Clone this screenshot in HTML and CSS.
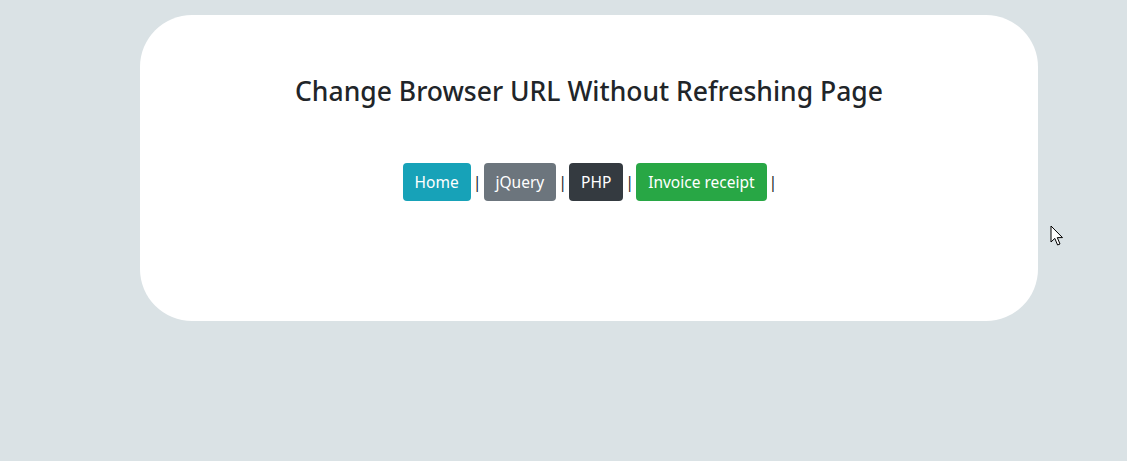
FILE: index.html
```html
<!DOCTYPE html>
<html lang="en">
<head>
<meta charset="utf-8">
<title>Change Browser URL Without Refreshing Page</title>
<link rel="stylesheet" href="styles.css">
</head>
<body>
<div class="card">
  <h3 class="title">Change Browser URL Without Refreshing Page</h3>
  <div class="nav">
    <a class="btn btn-info" href="#">Home</a><span class="sep">|</span><a class="btn btn-secondary" href="#">jQuery</a><span class="sep">|</span><a class="btn btn-dark" href="#">PHP</a><span class="sep">|</span><a class="btn btn-success" href="#">Invoice receipt</a><span class="sep">|</span>
  </div>
</div>
<svg class="cursor" width="14" height="22" viewBox="0 0 14 22" aria-hidden="true">
  <path d="M1 1 L1 17 L4.8 13.4 L7.6 20 L10 19 L7.3 12.6 L12.5 12.6 Z" fill="#fff" stroke="#000" stroke-width="1" stroke-linejoin="round"/>
</svg>
</body>
</html>
```
FILE: styles.css
```css
html, body {
  margin: 0;
  padding: 0;
}
body {
  background: #dae2e5;
  font-family: "Noto Sans", "Open Sans", sans-serif;
  color: #212529;
  height: 461px;
  position: relative;
  overflow: hidden;
}
.card {
  box-sizing: border-box;
  margin: 15px 0 0 140px;
  width: 898px;
  height: 306px;
  background: #fff;
  border-radius: 52px;
  padding-top: 61px;
  text-align: center;
}
.title {
  margin: 0;
  font-size: 26.5px;
  font-weight: 500;
  line-height: 1.2;
  color: #212529;
}
.nav {
  margin-top: 55px;
  padding-left: 4px;
  display: flex;
  justify-content: center;
  align-items: center;
  font-size: 16px;
  line-height: 1.5;
}
.btn {
  display: block;
  padding: 6px 12px;
  border-radius: 4px;
  color: #fff;
  text-decoration: none;
  font-size: 15.5px;
  line-height: 26px;
}
.sep {
  margin: 0 2px;
  color: #212529;
}
.btn-info { background: #17a2b8; }
.btn-secondary { background: #6c757d; }
.btn-dark { background: #343a40; }
.btn-success { background: #28a745; }
.cursor {
  position: absolute;
  left: 1050px;
  top: 225px;
}
```
